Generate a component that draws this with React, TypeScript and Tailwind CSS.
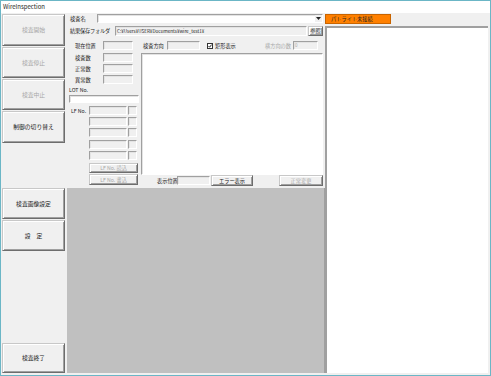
import React from "react";

const FONT = { fontFamily: '"Noto Sans CJK JP", "Liberation Sans", sans-serif' };

const btnBase =
  "flex items-center justify-center bg-[#f0f0f0] border border-t-[#c8c8c8] border-l-[#c8c8c8] border-r-[#6d6d6d] border-b-[#6d6d6d] shadow-[inset_1px_1px_0_#ffffff,inset_-1px_-1px_0_#a0a0a0] leading-none whitespace-nowrap";

function Btn({ label, className = "", disabled = false }: { label: string; className?: string; disabled?: boolean }) {
  return (
    <div className={`${btnBase} ${disabled ? "text-[#a8a8a8]" : "text-[#222]"} ${className}`}>{label}</div>
  );
}

const sunken =
  "border border-t-[#a0a0a0] border-l-[#a0a0a0] border-r-white border-b-white shadow-[inset_1px_1px_0_#e3e3e3]";

function Box({ className = "", children }: { className?: string; children?: React.ReactNode }) {
  return <div className={`${sunken} bg-[#f0f0f0] ${className}`}>{children}</div>;
}

function StatRow({ label, className = "" }: { label: string; className?: string }) {
  return (
    <div className={`flex items-center h-[9px] pl-[8px] ${className}`}>
      <span className="w-[28px] leading-none">{label}</span>
      <Box className="w-[30px] h-[9px]" />
    </div>
  );
}

function LfRow({ label, className = "" }: { label?: string; className?: string }) {
  return (
    <div className={`flex items-center h-[9px] ${className}`}>
      <span className="w-[22px] pl-[4px] leading-none">{label ?? ""}</span>
      <Box className="w-[38px] h-[9px]" />
      <Box className="w-[9px] h-[9px] ml-[1px]" />
    </div>
  );
}

export default function App() {
  return (
    <div
      className="w-[491px] h-[376px] border border-[#6bb6c6] bg-[#f0f0f0] flex flex-col overflow-hidden text-[5.2px] text-[#222]"
      style={FONT}
    >
      <div className="h-[12px] bg-white flex items-center pl-[2px] text-[6px] leading-none text-[#222]">
        WireInspection
      </div>
      <div className="flex flex-1 pt-[1px] pb-[2px]">
        {/* left buttons */}
        <div className="w-[63px] ml-[1px] flex flex-col text-[5.8px]">
          <Btn label="検査開始" disabled className="h-[32px]" />
          <Btn label="検査停止" disabled className="h-[31px] mt-[1px]" />
          <Btn label="検査中止" disabled className="h-[31px] mt-[1px]" />
          <Btn label="制御の切り替え" className="h-[32px] mt-[1px]" />
          <Btn label="検査画像設定" className="h-[31px] mt-[45px]" />
          <Btn label="設　定" className="h-[31px] mt-[1px]" />
          <div className="flex-1" />
          <Btn label="検査終了" className="h-[30px]" />
        </div>

        {/* middle */}
        <div className="w-[258px] ml-[2px] flex flex-col">
          <div className="h-[174px] flex flex-col">
            <div className="flex items-center h-[9px]">
              <span className="w-[30px] pl-[3px] leading-none">検査名</span>
              <div className={`${sunken} bg-white w-[226px] h-[9px] flex justify-end items-center`}>
                <div className="w-[7px] h-[7px] bg-[#f0f0f0] flex items-center justify-center">
                  <svg width="5" height="3" viewBox="0 0 5 3">
                    <path d="M0 0 L5 0 L2.5 3 Z" fill="#222" />
                  </svg>
                </div>
              </div>
            </div>
            <div className="flex items-center h-[10px] mt-[3px]">
              <span className="w-[48px] pl-[3px] leading-none whitespace-nowrap tracking-[-0.2px]">結果保存フォルダ</span>
              <Box className="w-[192px] h-[10px] flex items-center pl-[1px] text-[4.6px] leading-none whitespace-nowrap overflow-hidden">
                C:¥Users¥USER¥Documents¥wire_test1¥
              </Box>
              <Btn label="参照" className="w-[15px] h-[10px] ml-[1px]" />
            </div>

            <div className="flex mt-[5px]">
              {/* left sub column */}
              <div className="w-[72px] flex flex-col">
                <StatRow label="現在位置" />
                <StatRow label="検査数" className="mt-[3px]" />
                <StatRow label="正常数" className="mt-[2px]" />
                <StatRow label="異常数" className="mt-[2px]" />
                <div className="pl-[2px] mt-[3px] leading-none h-[7px]">LOT No.</div>
                <div className={`${sunken} bg-white h-[8px] w-[70px] ml-[2px] mt-[1px]`} />
                <LfRow label="LF No." className="mt-[3px]" />
                <LfRow className="mt-[2px]" />
                <LfRow className="mt-[2px]" />
                <LfRow className="mt-[3px]" />
                <LfRow className="mt-[2px]" />
                <Btn label="LF No. 読込" disabled className="w-[49px] h-[10px] ml-[22px] mt-[3px]" />
                <Btn label="LF No. 書込" disabled className="w-[49px] h-[11px] ml-[22px] mt-[1px]" />
              </div>

              {/* right sub column */}
              <div className="w-[182px] ml-[2px] flex flex-col">
                <div className="flex items-center h-[9px]">
                  <span className="w-[26px] pl-[2px] leading-none">検査方向</span>
                  <Box className="w-[33px] h-[9px]" />
                  <div className="ml-[7px] w-[6px] h-[6px] border border-[#333] bg-white flex items-center justify-center">
                    <svg width="4" height="4" viewBox="0 0 4 4">
                      <path d="M0.5 2 L1.6 3.2 L3.6 0.6" stroke="#111" strokeWidth="0.9" fill="none" />
                    </svg>
                  </div>
                  <span className="ml-[2px] leading-none">矩形表示</span>
                  <div className="flex-1" />
                  <span className="leading-none text-[#a8a8a8] mr-[2px]">横方向の数</span>
                  <Box className="w-[25px] h-[9px] flex items-center pl-[1px] text-[#a8a8a8] text-[4.5px] leading-none">
                    0
                  </Box>
                  <div className="w-[5px]" />
                </div>
                <div className={`${sunken} bg-white h-[122px] mt-[3px]`} />
                <div className="flex items-center h-[11px]">
                  <span className="ml-[16px] w-[20px] leading-none whitespace-nowrap">表示位置</span>
                  <Box className="w-[33px] h-[9px]" />
                  <Btn label="エラー表示" className="w-[42px] h-[11px] ml-[1px]" />
                  <div className="flex-1" />
                  <Btn label="正常変更" disabled className="w-[44px] h-[11px]" />
                </div>
              </div>
            </div>
          </div>
          <div className="flex-1 bg-[#c0c0c0] border-r border-[#a0a0a0]" />
        </div>

        {/* right */}
        <div className="w-[164px] flex flex-col">
          <div className="w-[66px] h-[10px] bg-[#ff8000] border border-[#c86400] flex items-center pl-[5px] leading-none text-[#222] whitespace-nowrap">
            パトライト未接続
          </div>
          <div className="flex-1 mt-[2px] mr-[1px] bg-white border-t-2 border-l-2 border-t-[#a0a0a0] border-l-[#a0a0a0]" />
        </div>
      </div>
    </div>
  );
}
